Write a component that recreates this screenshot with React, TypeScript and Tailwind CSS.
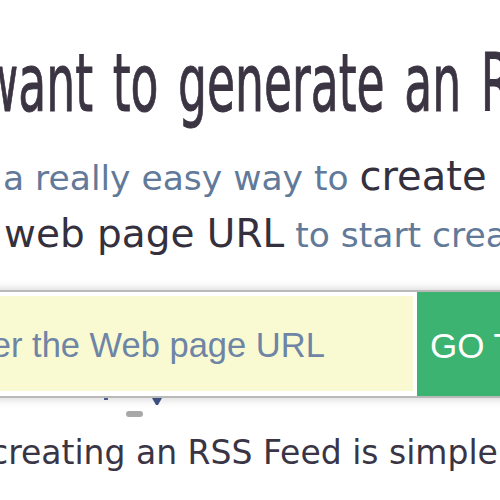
export default function App() {
  return (
    <div className="relative w-[500px] h-[500px] overflow-hidden bg-white">
      {/* Heading */}
      <div className="pt-[44px] h-[124px] whitespace-nowrap">
        <h1 className="inline-block origin-left scale-x-[0.57] -ml-[19px] text-[80px] leading-[80px] font-normal [word-spacing:9px] [-webkit-text-stroke:1px_#3b3442] text-[#3b3442] font-['DejaVu_Sans',sans-serif]">
          want to generate an RSS Feed?
        </h1>
      </div>

      {/* Subtitle */}
      <div className="mt-[23px] whitespace-nowrap font-['DejaVu_Sans',sans-serif]">
        <p className="h-[58px] leading-[58px] text-[34.5px] text-[#627a99] ml-[3px]">
          a really easy way to <span className="text-[40px] text-[#34303d]">create RSS</span>
        </p>
        <p className="h-[58px] leading-[58px] text-[34.5px] text-[#627a99] ml-[4px]">
          <span className="text-[39px] text-[#34303d]">web page URL</span> to start creating
        </p>
      </div>

      {/* URL form */}
      <div className="mt-[27px] -ml-[100px] w-[820px] flex border-y-2 border-[#b9b9b9] bg-white shadow-[0_0_10px_rgba(0,0,0,0.2)]">
        <div className="w-[517px] shrink-0 pt-[4px] pb-[5px] pl-[5px] pr-[4px]">
          <input
            className="block w-full h-[95px] bg-[#fafad2] pl-[35px] pt-[3px] text-[34.5px] text-[#333] font-['Liberation_Sans',sans-serif] placeholder:text-[#6e85a6] outline-none"
            placeholder="Enter the Web page URL"
          />
        </div>
        <button className="flex-1 bg-[#3cb371] pl-[13px] pt-[4px] text-left text-[35px] text-white whitespace-nowrap font-['Liberation_Sans',sans-serif]">
          GO TO FEED
        </button>
      </div>

      {/* bits of the illustration peeking out under the form */}
      <div className="absolute left-[104px] top-[398px] w-[4px] h-[2px] bg-[#4a5a8a]" />
      <svg className="absolute left-[152px] top-[398px]" width="10" height="7" viewBox="0 0 10 7">
        <polygon points="0,0 10,0 6,7 4,7" fill="#3d4f80" />
      </svg>
      <div className="absolute left-[126px] top-[411px] w-[17px] h-[6px] rounded-sm bg-[#a8a8a8]" />

      {/* Bottom line */}
      <p className="mt-[35px] -ml-[10px] whitespace-nowrap text-[33px] leading-[40px] text-[#3a3545] font-['DejaVu_Sans',sans-serif]">
        creating an RSS Feed is simple
      </p>
    </div>
  );
}
